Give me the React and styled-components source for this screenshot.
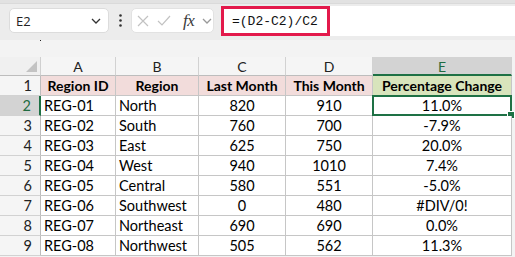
import styled, { createGlobalStyle } from 'styled-components';

const GlobalStyle = createGlobalStyle`
	html, body {
		margin: 0;
		padding: 0;
		background: #f3f3f3;
	}
`;

const Frame = styled.div`
	width: 515px;
	height: 257px;
	overflow: hidden;
	background: #f3f3f3;
	font-family: Lato, 'Noto Sans', sans-serif;
	display: flex;
	flex-direction: column;
`;

const RibbonEdge = styled.div`
	height: 3px;
	background: #e2e2e2;
	border-bottom: 1px solid #dadada;
`;

const FormulaBar = styled.div`
	height: 36px;
	display: flex;
	align-items: flex-start;
	padding: 4px 0 0 9px;
	box-sizing: border-box;
	background: #ececec;
`;

const NameBox = styled.div`
	width: 100px;
	height: 25px;
	box-sizing: border-box;
	background: #fff;
	border: 1px solid #dcdcdc;
	border-radius: 5px;
	display: flex;
	align-items: center;
	justify-content: space-between;
	padding: 0 7px 0 6px;
	font-family: 'Open Sans', sans-serif;
	font-size: 13px;
	color: #222;
`;

const Dots = styled.div`
	width: 22px;
	height: 25px;
	display: flex;
	align-items: center;
	justify-content: center;
`;

const FuncBox = styled.div`
	width: 83px;
	height: 25px;
	box-sizing: border-box;
	background: #fff;
	border: 1px solid #e2e2e2;
	border-radius: 5px;
	display: flex;
	align-items: center;
	padding: 0 0 0 5px;
	gap: 8px;
`;

const Fx = styled.span`
	font-family: 'Liberation Serif', serif;
	font-style: italic;
	font-size: 17px;
	color: #3a3a3a;
	margin-left: 4px;
	letter-spacing: -0.5px;
`;

const FormulaInput = styled.div`
	flex: 1;
	margin-left: 7px;
	margin-top: -2px;
	height: 30px;
	background: #fff;
	display: flex;
	align-items: stretch;
`;

const Highlight = styled.div`
	width: 109px;
	box-sizing: border-box;
	border: 3px solid #e3194b;
	display: flex;
	align-items: center;
	padding-left: 8px;
	font-family: 'Liberation Mono', monospace;
	font-size: 13px;
	color: #111;
`;

const Spacer = styled.div`
	height: 17px;
	position: relative;
	&::after {
		content: '';
		position: absolute;
		left: 40px;
		top: 0;
		width: 1px;
		height: 1px;
		background: #222;
	}
`;

const Grid = styled.div`
	display: grid;
	grid-template-columns: 41px 75px 83px 87px 87px 139px;
	grid-template-rows: 19px repeat(9, 20px);
	width: 512px;
`;

const Corner = styled.div`
	background: #f0f0f0;
	border-right: 1px solid #d0d0d0;
	border-bottom: 1px solid #bdbdbd;
	position: relative;
	&::after {
		content: '';
		position: absolute;
		right: 3px;
		bottom: 3px;
		width: 0;
		height: 0;
		border-left: 11px solid transparent;
		border-bottom: 11px solid #c3c3c3;
	}
`;

const ColHead = styled.div`
	background: ${(p) => (p.$active ? '#d3d3d3' : '#f5f5f5')};
	color: ${(p) => (p.$active ? '#1e6b41' : '#222')};
	border-right: 1px solid #d2d2d2;
	border-bottom: ${(p) => (p.$active ? '2px solid #1e7145' : '1px solid #bdbdbd')};
	display: flex;
	align-items: center;
	justify-content: center;
	font-size: 14px;
	padding-top: 1px;
	box-sizing: border-box;
`;

const RowHead = styled.div`
	background: ${(p) => (p.$active ? '#d3d3d3' : '#f5f5f5')};
	color: ${(p) => (p.$active ? '#1e6b41' : '#222')};
	border-right: ${(p) => (p.$active ? '2px solid #1e7145' : '1px solid #bdbdbd')};
	border-bottom: 1px solid #d2d2d2;
	display: flex;
	align-items: center;
	justify-content: flex-end;
	padding-right: 8px;
	font-size: 14.5px;
	box-sizing: border-box;
`;

const Cell = styled.div`
	position: relative;
	background: ${(p) => p.$bg || '#fff'};
	border-right: 1px solid #c6c6c6;
	border-bottom: 1px solid #c6c6c6;
	display: flex;
	align-items: center;
	justify-content: ${(p) => (p.$left ? 'flex-start' : 'center')};
	padding: 0 3px;
	font-size: ${(p) => (p.$bold ? '14px' : '14.5px')};
	font-weight: ${(p) => (p.$bold ? 700 : 400)};
	color: #000;
	white-space: nowrap;
	box-sizing: border-box;
`;

const Selection = styled.div`
	position: absolute;
	left: -1px;
	top: -1px;
	right: -1px;
	bottom: -1px;
	border: 2px solid #1e7145;
	pointer-events: none;
	&::after {
		content: '';
		position: absolute;
		right: -5px;
		bottom: -5px;
		width: 6px;
		height: 6px;
		background: #1e7145;
		border: 1px solid #fff;
	}
`;

const Chevron = ({ color = '#444' }) => (
	<svg width="10" height="6" viewBox="0 0 10 6">
		<path d="M1 1l4 4 4-4" fill="none" stroke={color} strokeWidth="1.3" />
	</svg>
);

const rows = [
	['REG-01', 'North', 820, 910, '11.0%'],
	['REG-02', 'South', 760, 700, '-7.9%'],
	['REG-03', 'East', 625, 750, '20.0%'],
	['REG-04', 'West', 940, 1010, '7.4%'],
	['REG-05', 'Central', 580, 551, '-5.0%'],
	['REG-06', 'Southwest', 0, 480, '#DIV/0!'],
	['REG-07', 'Northeast', 690, 690, '0.0%'],
	['REG-08', 'Northwest', 505, 562, '11.3%'],
];

const headers = ['Region ID', 'Region', 'Last Month', 'This Month', 'Percentage Change'];

const App = () => {
	return (
		<>
			<GlobalStyle />
			<Frame>
				<RibbonEdge />
				<FormulaBar>
					<NameBox>
						<span>E2</span>
						<Chevron color="#333" />
					</NameBox>
					<Dots>
						<svg width="3" height="13" viewBox="0 0 3 13">
							<circle cx="1.5" cy="1.5" r="1.3" fill="#333" />
							<circle cx="1.5" cy="6.5" r="1.3" fill="#333" />
							<circle cx="1.5" cy="11.5" r="1.3" fill="#333" />
						</svg>
					</Dots>
					<FuncBox>
						<svg width="12" height="12" viewBox="0 0 12 12">
							<path d="M1 1l10 10M11 1L1 11" stroke="#c2c2c2" strokeWidth="1.2" />
						</svg>
						<svg width="14" height="11" viewBox="0 0 14 11">
							<path d="M1 6l4 4 8-9" fill="none" stroke="#c2c2c2" strokeWidth="1.2" />
						</svg>
						<Fx>fx</Fx>
						<Chevron color="#999" />
					</FuncBox>
					<FormulaInput>
						<Highlight>=(D2-C2)/C2</Highlight>
					</FormulaInput>
				</FormulaBar>
				<Spacer />
				<Grid>
					<Corner />
					{['A', 'B', 'C', 'D', 'E'].map((c) => (
						<ColHead key={c} $active={c === 'E'}>
							{c}
						</ColHead>
					))}
					<RowHead>1</RowHead>
					{headers.map((h, i) => (
						<Cell key={h} $bold $bg={i === 4 ? '#d8e4bc' : '#f2dcdb'}>
							{h}
						</Cell>
					))}
					{rows.map((r, ri) => (
						<>
							<RowHead key={'h' + ri} $active={ri === 0}>
								{ri + 2}
							</RowHead>
							{r.map((v, ci) => (
								<Cell key={ri + '-' + ci} $left={ci < 2}>
									{v}
									{ri === 0 && ci === 4 && <Selection />}
								</Cell>
							))}
						</>
					))}
				</Grid>
			</Frame>
		</>
	);
};

export default App;
